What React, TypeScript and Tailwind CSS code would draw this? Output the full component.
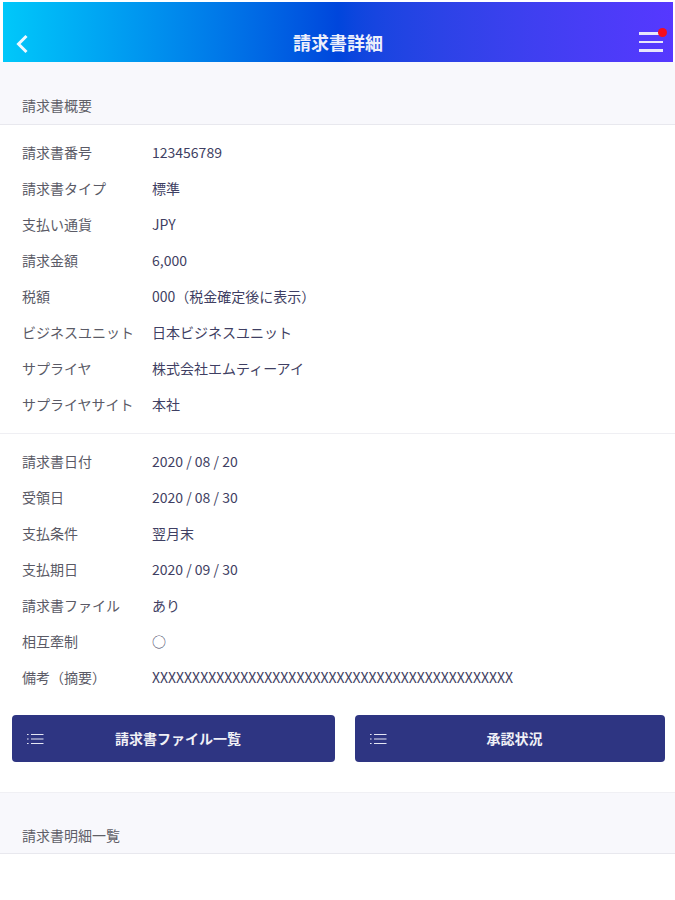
const font = "font-['Noto_Sans_CJK_JP','Noto_Sans',sans-serif]";

const group1: [string, string][] = [
  ["請求書番号", "123456789"],
  ["請求書タイプ", "標準"],
  ["支払い通貨", "JPY"],
  ["請求金額", "6,000"],
  ["税額", "000（税金確定後に表示）"],
  ["ビジネスユニット", "日本ビジネスユニット"],
  ["サプライヤ", "株式会社エムティーアイ"],
  ["サプライヤサイト", "本社"],
];

const group2: [string, string][] = [
  ["請求書日付", "2020 / 08 / 20"],
  ["受領日", "2020 / 08 / 30"],
  ["支払条件", "翌月末"],
  ["支払期日", "2020 / 09 / 30"],
  ["請求書ファイル", "あり"],
  ["相互牽制", "○"],
  ["備考（摘要）", "XXXXXXXXXXXXXXXXXXXXXXXXXXXXXXXXXXXXXXXXXXXXX"],
];

function Row({ label, value }: { label: string; value: string }) {
  return (
    <div className="flex h-9 items-center pb-[2px] pl-[22px] text-[14px]">
      <div className="w-[130px] shrink-0 text-[#5a5a66]">{label}</div>
      <div className="whitespace-nowrap text-[#3f3f63]">{value}</div>
    </div>
  );
}

function SectionHeader({ title, className }: { title: string; className: string }) {
  return (
    <div className={`flex items-end border-b border-[#e8e8ee] bg-[#f8f8fc] pl-[22px] text-[14px] text-[#5f5f68] ${className}`}>
      {title}
    </div>
  );
}

function ListIcon() {
  return (
    <svg width="17" height="12" viewBox="0 0 17 12" className="absolute left-[15px] top-1/2 -translate-y-1/2" fill="none" stroke="#e4e6f4" strokeWidth="1.2">
      <path d="M0 1.5h1.6M0 6h1.6M0 10.5h1.6M4 1.5h12.5M4 6h12.5M4 10.5h12.5" />
    </svg>
  );
}

function ActionButton({ label, className }: { label: string; className: string }) {
  return (
    <button className={`relative flex h-[47px] items-center justify-center rounded-[4px] bg-[#2e3582] pl-[9px] text-[14px] font-bold text-[#f0f0f6] ${className}`}>
      <ListIcon />
      {label}
    </button>
  );
}

export default function App() {
  return (
    <div className={`min-h-[900px] w-[675px] bg-white pt-[2px] ${font}`}>
      <header className="relative ml-[3px] mr-[2px] flex h-[60px] items-center justify-center bg-gradient-to-r from-[#00c8fa] via-[#0046dc] to-[#5638ff]">
        <svg width="14" height="20" viewBox="0 0 14 20" className="absolute left-[12px] top-[32px]" fill="none" stroke="#eef9ff" strokeWidth="3">
          <path d="M11.5 2L3.5 10 11.5 18" />
        </svg>
        <h1 className="mt-[21px] text-[18px] font-bold leading-[27px] text-[#eef0fb]">請求書詳細</h1>
        <div className="absolute left-[636px] top-[30px] flex w-[24px] flex-col gap-[6px]">
          <span className="h-[2.5px] bg-[#e8e6fb]" />
          <span className="h-[2.5px] bg-[#e8e6fb]" />
          <span className="h-[2.5px] bg-[#e8e6fb]" />
        </div>
        <span className="absolute left-[655px] top-[26px] h-[9px] w-[9px] rounded-full bg-[#f60d1e]" />
      </header>

      <SectionHeader title="請求書概要" className="h-[63px] pb-[8px]" />
      <div className="border-b border-[#efeff3] py-[10px]">
        {group1.map(([l, v]) => <Row key={l} label={l} value={v} />)}
      </div>
      <div className="pt-[10px]">
        {group2.map(([l, v]) => <Row key={l} label={l} value={v} />)}
      </div>
      <div className="mt-[19px] flex pl-[12px]">
        <ActionButton label="請求書ファイル一覧" className="w-[323px]" />
        <ActionButton label="承認状況" className="ml-[20px] w-[310px]" />
      </div>
      <div className="mt-[30px] border-t border-[#f0f0f4]">
        <SectionHeader title="請求書明細一覧" className="h-[61px] pb-[7px]" />
      </div>
    </div>
  );
}
